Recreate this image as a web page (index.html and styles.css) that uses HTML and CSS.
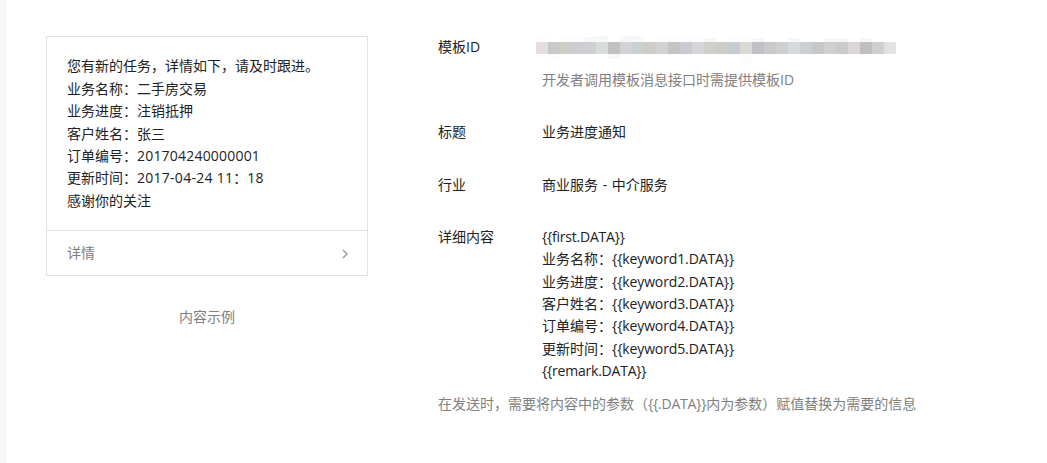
FILE: index.html
```html
<!DOCTYPE html>
<html lang="zh-CN">
<head>
<meta charset="utf-8">
<title>模板详情</title>
<link rel="stylesheet" href="styles.css">
</head>
<body>
<main class="panel">
  <section class="example">
    <div class="card">
      <div class="message">
        <p>您有新的任务，详情如下，请及时跟进。</p>
        <p>业务名称：二手房交易</p>
        <p>业务进度：注销抵押</p>
        <p>客户姓名：张三</p>
        <p>订单编号：<span class="num">201704240000001</span></p>
        <p>更新时间：<span class="date">2017-04-24 11</span>：<span class="date">18</span></p>
        <p>感谢你的关注</p>
      </div>
      <div class="more">
        <span>详情</span>
        <svg class="arrow" width="6" height="10" viewBox="0 0 6 10"><path d="M1 1l4 4-4 4" fill="none" stroke="#999" stroke-width="1.4"/></svg>
      </div>
    </div>
    <p class="caption">内容示例</p>
  </section>
  <section class="details">
    <div class="row">
      <div class="label">模板ID</div>
      <div class="value">
        <svg class="mosaic" width="360" height="28" viewBox="0 0 360 28" shape-rendering="crispEdges">
          <path fill="#fcfcfc" d="M0 3h12v5H0zM24 2h24v6H24zM120 2h48v6h-48zM192 2h24v6h-24zM12 20h12v4H12zM84 20h12v3H84zM204 20h12v9h-12z"/>
          <path fill="#f6f7f7" d="M48 3h12v5H48zM60 2h12v6H60zM84 2h24v6H84zM168 4h12v4h-12zM216 4h12v4h-12zM252 4h12v4h-12zM288 4h24v4h-24zM324 4h12v4h-12zM72 20h12v5H72z"/>
          <path fill="#e4dfdc" d="M0 8h12v12H0z"/><path fill="#c8c9cd" d="M12 8h12v12H12z"/>
          <path fill="#cdcec8" d="M24 8h12v12H24z"/><path fill="#cbcfd3" d="M36 8h12v12H36z"/>
          <path fill="#d0ced5" d="M48 8h12v12H48z"/><path fill="#d7ddd8" d="M60 8h12v12H60z"/>
          <path fill="#c2c1c0" d="M72 8h12v12H72z"/><path fill="#d3d2d8" d="M84 8h12v12H84z"/>
          <path fill="#cacfd0" d="M96 8h12v12H96z"/><path fill="#cdccc7" d="M108 8h12v12h-12z"/>
          <path fill="#d0d3d2" d="M120 8h12v12h-12z"/><path fill="#c3c4c3" d="M132 8h12v12h-12z"/>
          <path fill="#c9c9d0" d="M144 8h12v12h-12z"/><path fill="#d5d6d9" d="M156 8h12v12h-12z"/>
          <path fill="#ced0ca" d="M168 8h12v12h-12z"/><path fill="#cccdc6" d="M180 8h12v12h-12z"/>
          <path fill="#c5cad3" d="M192 8h12v12h-12z"/><path fill="#dadbd5" d="M204 8h12v12h-12z"/>
          <path fill="#c2c0c6" d="M216 8h12v12h-12z"/><path fill="#cacaca" d="M228 8h12v12h-12z"/>
          <path fill="#cfcfcd" d="M240 8h12v12h-12z"/><path fill="#d6dadf" d="M252 8h12v12h-12z"/>
          <path fill="#cacfd2" d="M264 8h12v12h-12z"/><path fill="#c8c8c8" d="M276 8h12v12h-12z"/>
          <path fill="#d2d0cf" d="M288 8h12v12h-12z"/><path fill="#c9cccb" d="M300 8h12v12h-12z"/>
          <path fill="#dad6d8" d="M312 8h12v12h-12z"/><path fill="#c0bfbe" d="M324 8h12v12h-12z"/>
          <path fill="#cdd0cf" d="M336 8h12v12h-12z"/><path fill="#e1e4e3" d="M348 8h12v12h-12z"/>
        </svg>
        <p class="hint">开发者调用模板消息接口时需提供模板ID</p>
      </div>
    </div>
    <div class="row"><div class="label">标题</div><div class="value">业务进度通知</div></div>
    <div class="row"><div class="label">行业</div><div class="value industry">商业服务 - 中介服务</div></div>
    <div class="row content">
      <div class="label">详细内容</div>
      <div class="value">
        <p><span class="outer">{{first.DATA}}</span></p>
        <p>业务名称：<span class="key">{{keyword1.DATA}}</span></p>
        <p>业务进度：<span class="key">{{keyword2.DATA}}</span></p>
        <p>客户姓名：<span class="key">{{keyword3.DATA}}</span></p>
        <p>订单编号：<span class="key">{{keyword4.DATA}}</span></p>
        <p>更新时间：<span class="key">{{keyword5.DATA}}</span></p>
        <p><span class="outer">{{remark.DATA}}</span></p>
      </div>
    </div>
    <p class="note">在发送时，需要将内容中的参数（<span class="outer">{{.DATA}}</span>内为参数）赋值替换为需要的信息</p>
  </section>
</main>
</body>
</html>
```
FILE: styles.css
```css
* { box-sizing: border-box; }
body {
  margin: 0;
  padding-left: 6px;
  background: #f5f6f8;
  color: #222;
  font: 14px/22.4px "Open Sans", "Noto Sans CJK SC", sans-serif;
}
p { margin: 0; white-space: nowrap; }
.panel {
  display: flex;
  gap: 70px;
  height: 463px;
  padding: 36px 0 0 40px;
  background: #fff;
  border-top-left-radius: 4px;
}
.example { width: 322px; }
.card { border: 1px solid #e2e2e2; }
.message { height: 193px; padding: 18.3px 20px 0; }
.more {
  display: flex;
  align-items: center;
  justify-content: space-between;
  height: 45px;
  padding: 0 19px 0 20px;
  border-top: 1px solid #e2e2e2;
  color: #808080;
}
.arrow { margin-top: 2px; }
.caption { margin-top: 30px; text-align: center; color: #808080; }
.details { display: flex; flex-direction: column; gap: 30px; }
.row { display: flex; }
.label { width: 104px; }
.mosaic { display: block; margin: -2px 0 7px -6px; overflow: visible; }
.industry { word-spacing: 1px; }
.content { margin-top: -0.4px; }
.hint, .note { color: #808080; }
.note { margin-top: -19.4px; }
.num { letter-spacing: 0.2px; }
.date { letter-spacing: 0.27px; }
.key { letter-spacing: -0.12px; }
.outer { letter-spacing: -0.22px; }
```
